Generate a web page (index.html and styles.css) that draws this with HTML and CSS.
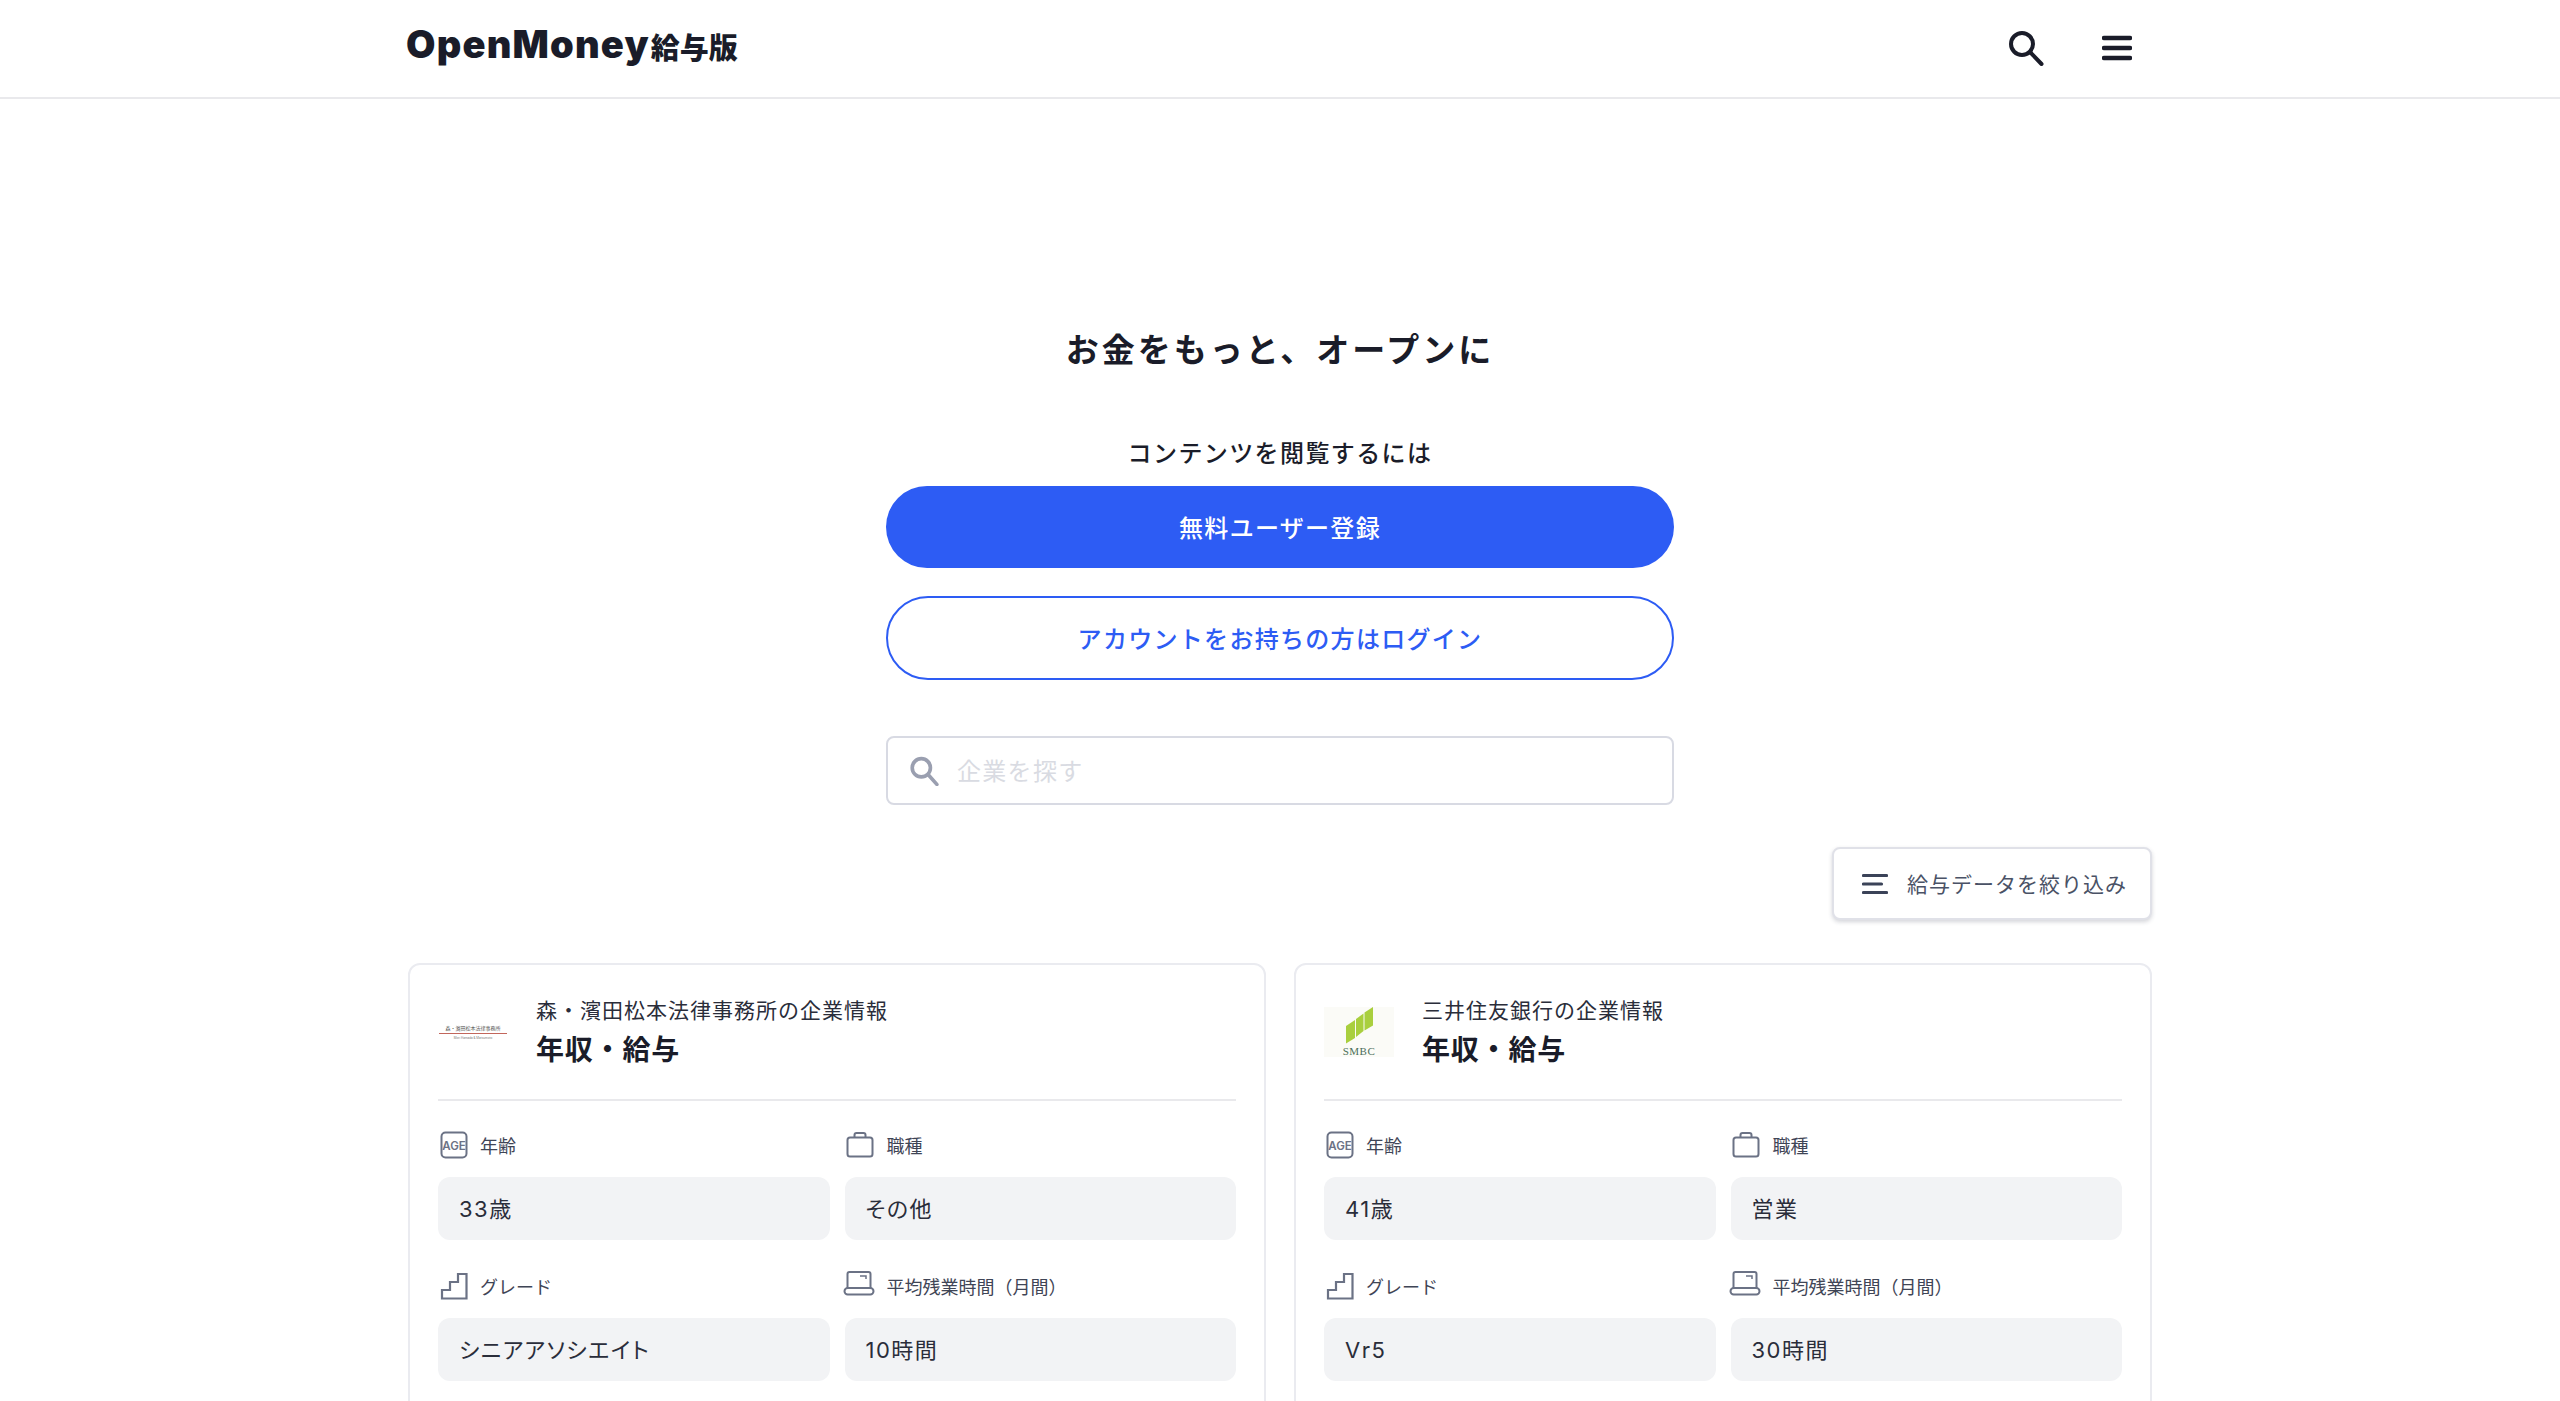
FILE: index.html

```html
<!DOCTYPE html>
<html lang="ja">
<head>
  <meta charset="UTF-8">
  <title>OpenMoney給与版</title>
  <link rel="stylesheet" href="styles.css">
</head>
<body>
  <svg class="sprite" width="0" height="0">
    <symbol id="i-bag" viewBox="0 0 28 28">
      <rect x="1.5" y="6.5" width="25" height="19" rx="2.5" fill="none" stroke="currentColor" stroke-width="2"/>
      <path d="M8.5 6.5V4a2 2 0 0 1 2-2h7a2 2 0 0 1 2 2v2.500" fill="none" stroke="currentColor" stroke-width="2"/>
    </symbol>
    <symbol id="i-stairs" viewBox="0 0 28 28">
      <path d="M2 26.500V18h8v-8h8V2h8.500v24.500z" fill="none" stroke="currentColor" stroke-width="2.200"/>
    </symbol>
    <symbol id="i-laptop" viewBox="0 0 32 28">
      <path d="M4.500 18V4a2 2 0 0 1 2-2h19a2 2 0 0 1 2 2v14" fill="none" stroke="currentColor" stroke-width="2"/>
      <rect x="1.500" y="18" width="29" height="6.500" rx="3.200" fill="none" stroke="currentColor" stroke-width="2"/>
      <path d="M17 6h6v3" fill="none" stroke="currentColor" stroke-width="1.500"/>
    </symbol>
  </svg>

  <div class="page">
    <header class="site-header">
      <div class="site-header-inner">
        <a class="brand"><span class="brand-name">OpenMoney</span><span class="brand-sub">給与版</span></a>
        <div class="header-icons">
          <svg class="icon-search" viewBox="0 0 36 36">
            <circle cx="14" cy="14" r="11" fill="none" stroke="currentColor" stroke-width="4"/>
            <path d="M22 22l11.500 12" fill="none" stroke="currentColor" stroke-width="4" stroke-linecap="round"/>
          </svg>
          <svg class="icon-menu" viewBox="0 0 30 26">
            <path d="M2 3h26M2 13h26M2 23h26" fill="none" stroke="currentColor" stroke-width="4.500" stroke-linecap="round"/>
          </svg>
        </div>
      </div>
    </header>

    <main class="content">
      <section class="hero">
        <h1 class="hero-title">お金をもっと、オープンに</h1>
        <p class="hero-lead">コンテンツを閲覧するには</p>
        <a class="btn btn-primary">無料ユーザー登録</a>
        <a class="btn btn-outline">アカウントをお持ちの方はログイン</a>
        <div class="search-box">
          <svg class="search-box-icon" viewBox="0 0 28 28">
            <circle cx="11.500" cy="11" r="8.500" fill="none" stroke="currentColor" stroke-width="3.400"/>
            <path d="M18 17.500l8 9" fill="none" stroke="currentColor" stroke-width="3.400" stroke-linecap="round"/>
          </svg>
          <span class="search-box-placeholder">企業を探す</span>
        </div>
      </section>

      <div class="filter-row">
        <button class="filter-btn">
          <svg class="filter-icon" viewBox="0 0 26 22">
            <path d="M1.500 2.500h23M1.500 11h18M1.500 19.500h23" fill="none" stroke="currentColor" stroke-width="3.200" stroke-linecap="round"/>
          </svg>
          <span class="filter-label">給与データを絞り込み</span>
        </button>
      </div>

      <div class="card-grid">
        <article class="card">
          <div class="card-head">
            <div class="logo logo-mori">
              <span class="mori-ja">森・濱田松本法律事務所</span>
              <span class="mori-line"></span>
              <span class="mori-en">Mori Hamada &amp; Matsumoto</span>
            </div>
            <div class="card-head-text">
              <div class="card-company">森・濱田松本法律事務所の企業情報</div>
              <div class="card-title">年収・給与</div>
            </div>
          </div>
          <div class="fields">
            <div class="field">
              <div class="field-label">
                <svg class="field-icon" viewBox="0 0 28 28">
                  <rect x="1.500" y="1.500" width="25" height="25" rx="4" fill="none" stroke="currentColor" stroke-width="2"/>
                  <text x="14" y="18.500" text-anchor="middle" class="age-text">AGE</text>
                </svg>年齢
              </div>
              <div class="field-value">33歳</div>
            </div>
            <div class="field">
              <div class="field-label"><svg class="field-icon field-icon-bag"><use href="#i-bag"/></svg>職種</div>
              <div class="field-value">その他</div>
            </div>
            <div class="field">
              <div class="field-label"><svg class="field-icon"><use href="#i-stairs"/></svg>グレード</div>
              <div class="field-value">シニアアソシエイト</div>
            </div>
            <div class="field">
              <div class="field-label"><svg class="field-icon field-icon-wide"><use href="#i-laptop"/></svg>平均残業時間（月間）</div>
              <div class="field-value">10時間</div>
            </div>
          </div>
        </article>

        <article class="card">
          <div class="card-head">
            <div class="logo logo-smbc">
              <svg class="smbc-mark" viewBox="0 0 27 37">
                <path d="M0 19l9-6v18l-9 5.500z" fill="#a9cf3e"/>
                <path d="M10 12l7.500-5.500v17.500l-7.500 6z" fill="#a9cf3e"/>
                <path d="M18.500 5.500l8.500-5.500v18.500l-8.500 5z" fill="#a9cf3e"/>
              </svg>
              <span class="smbc-name">SMBC</span>
            </div>
            <div class="card-head-text">
              <div class="card-company">三井住友銀行の企業情報</div>
              <div class="card-title">年収・給与</div>
            </div>
          </div>
          <div class="fields">
            <div class="field">
              <div class="field-label">
                <svg class="field-icon" viewBox="0 0 28 28">
                  <rect x="1.500" y="1.500" width="25" height="25" rx="4" fill="none" stroke="currentColor" stroke-width="2"/>
                  <text x="14" y="18.500" text-anchor="middle" class="age-text">AGE</text>
                </svg>年齢
              </div>
              <div class="field-value">41歳</div>
            </div>
            <div class="field">
              <div class="field-label"><svg class="field-icon field-icon-bag"><use href="#i-bag"/></svg>職種</div>
              <div class="field-value">営業</div>
            </div>
            <div class="field">
              <div class="field-label"><svg class="field-icon"><use href="#i-stairs"/></svg>グレード</div>
              <div class="field-value">Vr5</div>
            </div>
            <div class="field">
              <div class="field-label"><svg class="field-icon field-icon-wide"><use href="#i-laptop"/></svg>平均残業時間（月間）</div>
              <div class="field-value">30時間</div>
            </div>
          </div>
        </article>
      </div>
    </main>
  </div>
</body>
</html>
```

FILE: styles.css

```css
html, body {
  margin: 0;
  padding: 0;
  background: #fff;
  color: #1a1c29;
  font-family: Inter, "Noto Sans CJK JP", sans-serif;
}
.sprite {
  position: absolute;
}
.page {
  height: 100vh;
  overflow: hidden;
}

/* header */
.site-header {
  height: 97px;
  border-bottom: 2px solid #e9e9ec;
}
.site-header-inner {
  width: 1748px;
  height: 100%;
  margin: 0 auto;
  display: flex;
  align-items: center;
  justify-content: space-between;
}
.brand {
  display: flex;
  align-items: center;
  gap: 1px;
  margin-top: -9px;
}
.brand-name {
  font-size: 38px;
  font-weight: 900;
  letter-spacing: 1.2px;
}
.brand-sub {
  font-size: 29px;
  font-weight: 900;
  margin-top: 4px;
}
.header-icons {
  display: flex;
  align-items: center;
  gap: 58px;
  margin-top: -2px;
  margin-right: 22px;
}
.icon-search {
  width: 36px;
  height: 36px;
}
.icon-menu {
  width: 30px;
  height: 26px;
}

/* hero */
.content {
  width: 1744px;
  margin: 0 auto;
}
.hero {
  display: flex;
  flex-direction: column;
  align-items: center;
}
.hero-title {
  margin: 227px 0 0;
  font-size: 33px;
  line-height: 48px;
  font-weight: 700;
  letter-spacing: 3px;
}
.hero-lead {
  margin: 62px 0 0;
  font-size: 24px;
  line-height: 36px;
  font-weight: 500;
  letter-spacing: 1.4px;
}
.btn {
  box-sizing: border-box;
  width: 788px;
  display: flex;
  align-items: center;
  justify-content: center;
  padding-bottom: 2px;
  font-size: 24px;
  font-weight: 500;
  letter-spacing: 1.3px;
  border-radius: 42px;
}
.btn-primary {
  height: 82px;
  margin-top: 14px;
  background: #2d5cf4;
  color: #fff;
}
.btn-outline {
  height: 84px;
  margin-top: 28px;
  background: #fff;
  color: #2d5cf4;
  border: 2px solid #2d5cf4;
}
.search-box {
  box-sizing: border-box;
  width: 788px;
  height: 69px;
  margin-top: 56px;
  padding-left: 21px;
  display: flex;
  align-items: center;
  gap: 18px;
  border: 2px solid #d8dae3;
  border-radius: 8px;
}
.search-box-icon {
  width: 30px;
  height: 30px;
  color: #9a9fb0;
}
.search-box-placeholder {
  margin-top: -2px;
  font-size: 24px;
  letter-spacing: 1.3px;
  color: #d9dbe2;
}

/* filter */
.filter-row {
  display: flex;
  justify-content: flex-end;
  margin-top: 42px;
}
.filter-btn {
  box-sizing: border-box;
  width: 320px;
  height: 73px;
  padding: 0 0 0 28px;
  display: flex;
  align-items: center;
  gap: 19px;
  background: #fff;
  border: 2px solid #e0e1e8;
  border-radius: 8px;
  box-shadow: 0 2px 4px rgba(40, 45, 70, 0.2);
  font-family: inherit;
  font-size: 21px;
  letter-spacing: 1px;
  color: #4a5266;
}
.filter-label {
  margin-top: -2px;
}
.filter-icon {
  width: 26px;
  height: 22px;
  color: #3b4358;
}

/* cards */
.card-grid {
  display: grid;
  grid-template-columns: 1fr 1fr;
  gap: 28px;
  margin-top: 43px;
}
.card {
  box-sizing: border-box;
  height: 640px;
  padding: 0 28px;
  border: 2px solid #eaebf0;
  border-radius: 12px;
}
.card-head {
  height: 134px;
  display: flex;
  align-items: center;
  gap: 28px;
  border-bottom: 2px solid #e9e9ec;
}
.logo {
  width: 70px;
  height: 50px;
  flex: none;
  display: flex;
  flex-direction: column;
  align-items: center;
  justify-content: center;
}
.mori-ja {
  font-size: 5px;
  line-height: 8px;
  color: #555;
  white-space: nowrap;
}
.mori-line {
  width: 68px;
  height: 1px;
  margin: 1px 0;
  background: #c2665c;
}
.mori-en {
  font-size: 3px;
  line-height: 6px;
  color: #777;
  white-space: nowrap;
}
.logo-smbc {
  background: #fbfbf7;
}
.smbc-mark {
  width: 27px;
  height: 37px;
  margin-bottom: 2px;
}
.smbc-name {
  font-family: "Liberation Serif", serif;
  font-size: 11px;
  line-height: 11px;
  letter-spacing: 0.5px;
  color: #4b6f5a;
}
.card-company {
  font-size: 21px;
  line-height: 32px;
  letter-spacing: 1px;
  color: #2a2d3a;
}
.card-title {
  margin-top: 3px;
  font-size: 28px;
  line-height: 40px;
  font-weight: 700;
  letter-spacing: 0.8px;
}
.fields {
  display: grid;
  grid-template-columns: 1fr 1fr;
  column-gap: 15px;
  row-gap: 26px;
  padding-top: 24px;
}
.field-label {
  box-sizing: border-box;
  height: 52px;
  padding-top: 6px;
  display: flex;
  align-items: flex-start;
  gap: 12px;
  font-size: 18px;
  line-height: 32px;
  color: #3f4556;
}
.field-icon {
  width: 28px;
  height: 28px;
  margin-left: 2px;
  color: #6b7285;
  flex: none;
}
.field-icon-bag {
  margin-left: 1px;
  margin-right: 1px;
}
.field-icon-wide {
  width: 32px;
  margin-left: -2px;
  margin-top: -2px;
}
.age-text {
  font-family: Inter, sans-serif;
  font-size: 11.500px;
  font-weight: 600;
  fill: currentColor;
}
.field-value {
  height: 63px;
  padding-left: 21px;
  display: flex;
  align-items: center;
  background: #f2f3f5;
  border-radius: 12px;
  font-size: 22px;
  line-height: 30px;
  letter-spacing: 1.500px;
  font-feature-settings: "palt";
  color: #2a2d3a;
}
```
